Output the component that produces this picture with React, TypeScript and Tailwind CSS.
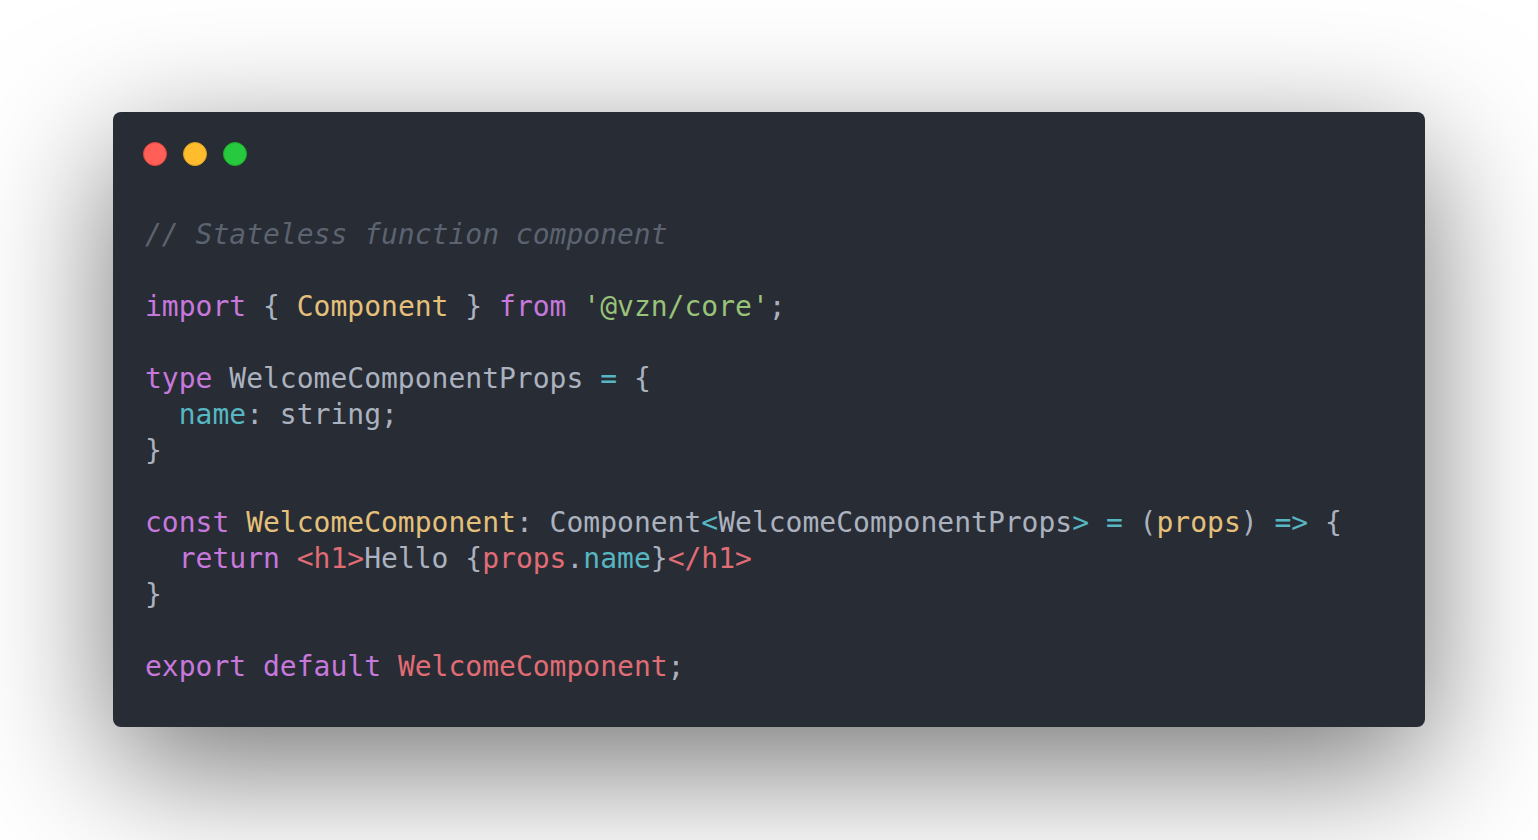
import React from "react";

const C = {
  kw: "text-[#c678dd]",
  yl: "text-[#e5c07b]",
  gr: "text-[#98c379]",
  cy: "text-[#56b6c2]",
  rd: "text-[#e06c75]",
  tx: "text-[#abb2bf]",
  cm: "text-[#5c6370] italic",
};

type Tok = [string, string];

const lines: Tok[][] = [
  [["// Stateless function component", C.cm]],
  [],
  [
    ["import", C.kw],
    [" { ", C.tx],
    ["Component", C.yl],
    [" } ", C.tx],
    ["from", C.kw],
    [" ", C.tx],
    ["'@vzn/core'", C.gr],
    [";", C.tx],
  ],
  [],
  [
    ["type", C.kw],
    [" WelcomeComponentProps ", C.tx],
    ["=", C.cy],
    [" {", C.tx],
  ],
  [
    ["  ", C.tx],
    ["name", C.cy],
    [": string;", C.tx],
  ],
  [["}", C.tx]],
  [],
  [
    ["const", C.kw],
    [" ", C.tx],
    ["WelcomeComponent", C.yl],
    [": Component", C.tx],
    ["<", C.cy],
    ["WelcomeComponentProps", C.tx],
    [">", C.cy],
    [" ", C.tx],
    ["=", C.cy],
    [" (", C.tx],
    ["props", C.yl],
    [") ", C.tx],
    ["=>", C.cy],
    [" {", C.tx],
  ],
  [
    ["  ", C.tx],
    ["return", C.kw],
    [" ", C.tx],
    ["<h1>", C.rd],
    ["Hello {", C.tx],
    ["props", C.rd],
    [".", C.tx],
    ["name", C.cy],
    ["}", C.tx],
    ["</h1>", C.rd],
  ],
  [["}", C.tx]],
  [],
  [
    ["export", C.kw],
    [" ", C.tx],
    ["default", C.kw],
    [" ", C.tx],
    ["WelcomeComponent", C.rd],
    [";", C.tx],
  ],
];

export default function App() {
  return (
    <div className="w-[1538px] h-[840px] bg-white overflow-hidden pt-[112px] pl-[113px]">
      <div className="w-[1312px] rounded-[8px] bg-[#282c34] shadow-[0_40px_136px_rgba(0,0,0,0.55)] pt-[30px] pb-[42px] pl-[32px]">
        <div className="flex gap-[16px] ml-[-2px]">
          <div className="w-[24px] h-[24px] rounded-full bg-[#ff5f56] border border-[#e0443e]" />
          <div className="w-[24px] h-[24px] rounded-full bg-[#ffbd2e] border border-[#dea123]" />
          <div className="w-[24px] h-[24px] rounded-full bg-[#27c93f] border border-[#1aab29]" />
        </div>
        <div
          className="mt-[51px] text-[28px] leading-[36px] whitespace-pre"
          style={{ fontFamily: '"DejaVu Sans Mono", "Liberation Mono", monospace' }}
        >
          {lines.map((l, i) => (
            <div key={i} className="h-[36px]">
              {l.map(([t, c], j) => (
                <span key={j} className={c}>
                  {t}
                </span>
              ))}
            </div>
          ))}
        </div>
      </div>
    </div>
  );
}
